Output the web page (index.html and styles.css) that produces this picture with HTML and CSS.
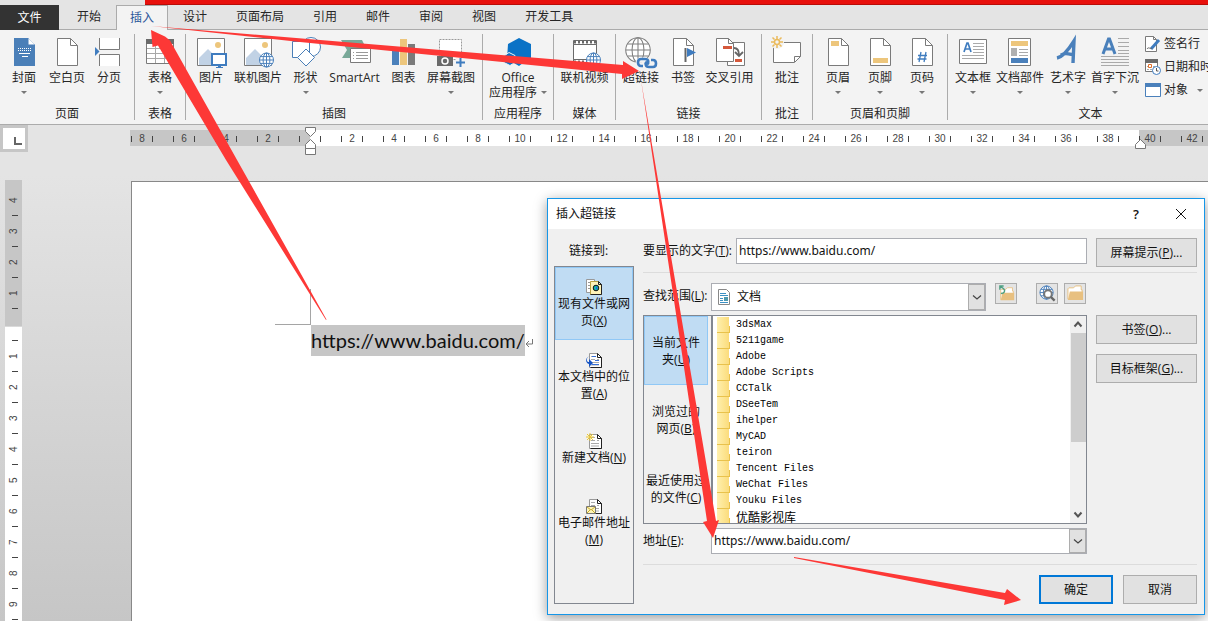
FILE: index.html
```
<!DOCTYPE html>
<html lang="zh-CN">
<head>
<meta charset="utf-8">
<title>插入超链接</title>
<link rel="stylesheet" href="styles.css">
</head>
<body>
<svg class="defs" aria-hidden="true">
  <symbol id="page" viewBox="0 0 36 36"><path d="M8.5 4.5h13l7 7v20h-20z" fill="#fff" stroke="#7a7a7a"/><path d="M21.5 4.5v7h7" fill="none" stroke="#7a7a7a"/></symbol>
  <symbol id="globe" viewBox="0 0 16 16"><circle cx="8" cy="8" r="7" fill="#fff"/><g fill="none" stroke="currentColor"><circle cx="8" cy="8" r="7"/><ellipse cx="8" cy="8" rx="3.4" ry="7"/><path d="M8 1v14M1 8h14M2 4.6h12M2 11.4h12"/></g></symbol>
  <symbol id="picture" viewBox="0 0 36 36"><path d="M4.500 4.500h27v27h-27z" fill="#fff" stroke="#7a7a7a"/><path d="M6 24l9-9 9 9v7H6z" fill="#c1d2e5"/><circle cx="25" cy="11" r="3" fill="#edc67c"/></symbol>
  <symbol id="doc" viewBox="0 0 16 16"><path d="M3.500 1.500h8l4 4v10h-12z" fill="#fff" stroke="#999"/><path d="M15.500 5.500v10h-11M11.500 1.500l4 4h-4z" fill="none" stroke="#222"/><path d="M5 4.500h4M5 7.500h4M5 10.500h8M5 13h8M11 7.500h2" stroke="#aaa"/></symbol>
  <symbol id="chevron" viewBox="0 0 10 10"><path d="M1 3.500l4 3.500 4-3.500" fill="none" stroke="#444" stroke-width="1.200"/></symbol>
  <symbol id="folder" viewBox="0 0 18 18"><path d="M1 15V4l1-1h5l2-2h6v4h1v10z" fill="#fff" stroke="#e8c080"/><path d="M1 16l2-9h14v9z" fill="#e8c080"/></symbol>
</svg>

<header class="top">
  <div class="strip"></div>
  <nav class="tabs">
    <button class="tab file">文件</button><button class="tab">开始</button><button class="tab active">插入</button><button class="tab">设计</button><button class="tab">页面布局</button><button class="tab">引用</button><button class="tab">邮件</button><button class="tab">审阅</button><button class="tab">视图</button><button class="tab">开发工具</button>
  </nav>
</header>

<section class="ribbon">
  <div class="group pages"><div class="tools">
    <button class="tool w40"><svg viewBox="0 0 36 36"><path d="M8 4h14l7 7v21H8z" fill="#4a7fb8"/><path d="M22 4v7h7" fill="#fff" stroke="#4a7fb8"/><path d="M12 14.500h13M12 16.500h13" stroke="#fff" stroke-dasharray="1 1"/><path d="M13 19.500h11M16 22.500h6" stroke="#fff"/></svg>封面<i class="caret"></i></button>
    <button class="tool w46"><svg><use href="#page"/></svg>空白页</button>
    <button class="tool w38"><svg viewBox="0 0 36 36"><path d="M8.500 4v11.500h20V4M8.500 32V20.500h20V32" fill="#fff" stroke="#7a7a7a"/><path d="M4 13l4.500 4.500L4 22z" fill="#3f7cbf"/></svg>分页</button>
  </div><div class="caption">页面</div></div>
  <div class="group single"><div class="tools">
    <button class="tool w50"><svg viewBox="0 0 36 36"><path d="M4.500 5.500h27v24h-27z" fill="#fff" stroke="#7a7a7a"/><path d="M4 5h28v5H4z" fill="#6a6a6a"/><path d="M5 14.500h26M5 19.500h26M5 24.500h26M13.500 10v19M22.500 10v19" stroke="#a8a8a8"/></svg>表格<i class="caret"></i></button>
  </div><div class="caption">表格</div></div>
  <div class="group art"><div class="tools">
    <button class="tool w36"><svg viewBox="0 0 36 36"><use href="#picture"/><path d="M19 20h14v11H19z" fill="#fff" stroke="#3f7cbf" stroke-width="2"/><path d="M25 31h3v2h2v1h-7v-1h2z" fill="#3f7cbf"/></svg>图片</button>
    <button class="tool w58"><svg viewBox="0 0 36 36"><use href="#picture"/><use class="blue" href="#globe" x="18.500" y="18" width="16" height="16"/></svg>联机图片</button>
    <button class="tool w37"><svg viewBox="0 0 36 36" fill="#fff" stroke="#4a7fb8"><circle cx="23" cy="13" r="9.500"/><path d="M4.500 7.500h17v16h-17z"/><path d="M18 15l8.500 8.500L18 32l-8.500-8.500z"/></svg>形状<i class="caret"></i></button>
    <button class="tool w61"><svg viewBox="0 0 36 36"><path d="M4 6h21l4 8-6 10H5l5-8z" fill="#78a898"/><path d="M13.500 14.500h20v14h-20z" fill="#fff" stroke="#7a7a7a"/><path d="M19 18.500h12M19 21.500h12M19 24.500h12M16 18.500h1M16 21.500h1M16 24.500h1" stroke="#999"/></svg>SmartArt</button>
    <button class="tool w37"><svg viewBox="0 0 36 36"><path d="M6 15h7v16H6z" fill="#4a80bb"/><path d="M14 5h7v26h-7z" fill="#edc67c"/><path d="M22 10h7v21h-7z" fill="#7a7a7a"/></svg>图表</button>
    <button class="tool w58"><svg viewBox="0 0 36 36"><path d="M6.500 5.500h22v20h-22z" fill="#fff" stroke="#999" stroke-dasharray="2 1"/><path d="M4 22h4l1-2h6l1 2h4v10H4z" fill="#6a6a6a"/><circle cx="12" cy="27" r="3" fill="none" stroke="#fff" stroke-width="1.500"/><path d="M23 24h9v9h-9z" fill="#f3f3f3"/><path d="M27.500 24v9M23 28.500h9" stroke="#3f7cbf" stroke-width="2"/></svg>屏幕截图<i class="caret"></i></button>
  </div><div class="caption">插图</div></div>
  <div class="group apps"><div class="tools">
    <button class="tool w70"><svg viewBox="0 0 36 36"><path d="M19 4l12 6v14l-8 5-4 3-12-7 1-15z" fill="#0a72c6"/><path d="M4 22l5-3.500 6 3v7l-5 3-6-3z" fill="#0a72c6" stroke="#f3f3f3"/></svg>Office<span class="two">应用程序<i class="caret beside"></i></span></button>
  </div><div class="caption">应用程序</div></div>
  <div class="group media"><div class="tools">
    <button class="tool w61"><svg viewBox="0 0 36 36"><path d="M6.500 6.500h23v23h-23z" fill="#fff" stroke="#6a6a6a"/><path d="M7 8h22M7 28h22" stroke="#6a6a6a" stroke-width="3" stroke-dasharray="2 2"/><path d="M6.500 10.500h23v15h-23z" fill="#fff" stroke="#6a6a6a"/><use class="blue" href="#globe" x="18.500" y="18" width="16" height="16"/></svg>联机视频</button>
  </div><div class="caption">媒体</div></div>
  <div class="group links"><div class="tools">
    <button class="tool w40"><svg viewBox="0 0 36 36"><use class="gray" href="#globe" x="1" y="2" width="28" height="28"/><g fill="none" stroke="#f3f3f3" stroke-width="5"><rect x="15" y="26" width="9" height="6" rx="3"/><rect x="23" y="26" width="9" height="6" rx="3"/></g><g fill="none" stroke="#3f7cbf" stroke-width="2.600"><path d="M20 32h-2c-4 0-4-7 0-7h4c4 0 4 4 2 5.500"/><path d="M28 26h2c4 0 4 7 0 7h-4c-4 0-4-4-2-5.500"/></g></svg>超链接</button>
    <button class="tool w44"><svg viewBox="0 0 36 36"><use href="#page"/><path d="M20.500 14v14" stroke="#666" stroke-width="2"/><path d="M22 14l9 4.500-9 4.500z" fill="#3f7cbf"/></svg>书签</button>
    <button class="tool w49"><svg viewBox="0 0 36 36"><path d="M15.500 8.500h17v23h-17z" fill="#fff" stroke="#7a7a7a"/><path d="M4.500 4.500h12l5 5v18h-17z" fill="#fff" stroke="#7a7a7a"/><path d="M16.500 4.500v5h5" fill="none" stroke="#7a7a7a"/><path d="M11 12h9v3h-9zM23 25h7v3h-7z" fill="#d5583b"/><path d="M22 14c4 0 5 3 5 7M23 18l4 4 4-4" fill="none" stroke="#666" stroke-width="1.800"/></svg>交叉引用</button>
  </div><div class="caption">链接</div></div>
  <div class="group single"><div class="tools">
    <button class="tool w50"><svg viewBox="0 0 36 36"><path d="M4.500 8.500h27v14l-6 6h-21z" fill="#fff" stroke="#7a7a7a"/><path d="M25.500 28v-5.500h6" fill="none" stroke="#7a7a7a"/><circle cx="8" cy="8" r="7" fill="#f3f3f3"/><circle cx="8" cy="8" r="2.500" fill="none" stroke="#eaba5c" stroke-width="1.500"/><path d="M8 2v3M8 11v3M2 8h3M11 8h3M3.500 3.500l2 2M10.500 10.500l2 2M12.500 3.500l-2 2M5.500 10.500l-2 2" stroke="#eaba5c" stroke-width="1.500"/></svg>批注</button>
  </div><div class="caption">批注</div></div>
  <div class="group heads"><div class="tools">
    <button class="tool w42"><svg viewBox="0 0 36 36"><use href="#page"/><path d="M11 7h8v5h-8z" fill="#edc67c"/></svg>页眉<i class="caret"></i></button>
    <button class="tool w42"><svg viewBox="0 0 36 36"><use href="#page"/><path d="M11 24h15v5H11z" fill="#edc67c"/></svg>页脚<i class="caret"></i></button>
    <button class="tool w42"><svg viewBox="0 0 36 36"><use href="#page"/><path d="M17 18l-2 10M22 18l-2 10M14 21.500h9M13.500 25h9" stroke="#3f7cbf" stroke-width="1.300"/></svg>页码<i class="caret"></i></button>
  </div><div class="caption">页眉和页脚</div></div>
  <div class="group words"><div class="tools">
    <button class="tool w40"><svg viewBox="0 0 36 36"><path d="M4.500 5.500h27v24h-27z" fill="#fff" stroke="#7a7a7a"/><path d="M9 18l3-9h1l3 9M10 15h5" fill="none" stroke="#3f7cbf" stroke-width="1.700"/><path d="M18 9.500h11M18 12.500h11M18 15.500h11M18 18.500h11M7 21.500h22M7 24.500h22" stroke="#aaa"/></svg>文本框<i class="caret"></i></button>
    <button class="tool w54"><svg viewBox="0 0 36 36"><path d="M6.500 4.500h22v27h-22z" fill="#fff" stroke="#7a7a7a"/><path d="M9 7h17v5H9z" fill="#edc67c"/><path d="M9 14h6v8H9z" fill="#b0b0b0"/><path d="M17 15.500h9M17 18.500h9M17 21.500h9" stroke="#aaa"/><path d="M9 24h17v5H9z" fill="#4a80bb"/></svg>文档部件<i class="caret"></i></button>
    <button class="tool w42"><svg viewBox="0 0 36 36"><path d="M7 24c5-1 12-9 17-17l-1 22M11 21c4-3 8-1 13 0" fill="none" stroke="#4a80bb" stroke-width="3.400"/></svg>艺术字<i class="caret"></i></button>
    <button class="tool w52"><svg viewBox="0 0 36 36"><path d="M6 20l5.500-15h1L18 20M8 15h8" fill="none" stroke="#4a80bb" stroke-width="3"/><path d="M21 4.500h11M21 8.500h11M21 12.500h11M21 16.500h11M21 19.500h11M4 22.500h28M4 25.500h28M4 28.500h28M4 31.500h28" stroke="#aaa"/></svg>首字下沉<i class="caret"></i></button>
    <div class="stack">
      <button class="mini"><svg viewBox="0 0 16 16"><path d="M.5.500h8l3 3v12H.5z" fill="#fff" stroke="#7a7a7a"/><path d="M8.500.500v3h3" fill="none" stroke="#7a7a7a"/><path d="M6 13l8-9" stroke="#3f7cbf" stroke-width="3"/><path d="M2 13c2-3 3 1 5-1" fill="none" stroke="#666"/></svg>签名行</button>
      <button class="mini"><svg viewBox="0 0 16 16"><path d="M.5.500h12v12H.5z" fill="#fff" stroke="#777"/><path d="M0 0h13v4H0z" fill="#6a6a6a"/><path d="M2 7.500h9M2 10.500h9" stroke="#aaa" stroke-dasharray="2 1"/><path d="M3.500 5.500h3v3h-3z" fill="#fff" stroke="#e0702a"/><circle cx="11.500" cy="11.500" r="4" fill="#fff" stroke="#3f7cbf"/><path d="M11.500 9v3h2" fill="none" stroke="#555"/></svg>日期和时间</button>
      <button class="mini"><svg viewBox="0 0 16 16"><path d="M.5 1.500h15v13H.5z" fill="#fff" stroke="#4a80bb"/><path d="M0 1h16v4H0z" fill="#4a80bb"/></svg>对象<i class="caret beside far"></i></button>
    </div>
  </div><div class="caption">文本</div></div>
</section>

<main class="work">
  <div class="ruler-row">
    <button class="corner" aria-label="制表符"><svg viewBox="0 0 22 21"><path d="M12 9v7h7" fill="none" stroke="#666" stroke-width="2"/></svg></button>
    <div class="ruler"><b>8</b><b>6</b><b>4</b><b>2</b><b></b><b>2</b><b>4</b><b>6</b><b>8</b><b>10</b><b>12</b><b>14</b><b>16</b><b>18</b><b>20</b><b>22</b><b>24</b><b>26</b><b>28</b><b>30</b><b>32</b><b>34</b><b>36</b><b>38</b><b>40</b><b>42</b>
      <svg class="indent left" viewBox="0 0 11 28" fill="#fff" stroke="#777"><path d="M.5.500h10v4l-5 5-5-5zM.5 21.500v-4l5-5 5 5v4zM.5 21.500h10v6H.5z"/></svg>
      <svg class="indent right" viewBox="0 0 11 28" fill="#fff" stroke="#777"><path d="M.5 21.500v-4l5-5 5 5v4z"/></svg>
    </div>
  </div>
  <div class="canvas">
    <div class="vruler"><div class="vtop"><b>4</b><b>3</b><b>2</b><b>1</b></div><div class="vmain"><b>1</b><b>2</b><b>3</b><b>4</b><b>5</b><b>6</b><b>7</b><b>8</b><b>9</b></div></div>
    <article class="sheet">
      <div class="crop"></div>
      <p class="line"><mark>https://www.baidu.com/</mark><svg viewBox="0 0 8 10"><path d="M7.500 1v5H1M4 3L1 6l3 3" fill="none" stroke="#777"/></svg></p>
    </article>
  </div>
</main>

<form class="dialog" role="dialog" aria-labelledby="dlg-title">
  <header class="title"><span id="dlg-title">插入超链接</span><span class="grow"></span><button type="button" class="help">?</button><button type="button" class="close" aria-label="关闭"><svg viewBox="0 0 12 12"><path d="M1 1l10 10M11 1L1 11" stroke="#111"/></svg></button></header>
  <div class="content">
    <aside class="targets">
      <div class="heading">链接到:</div>
      <div class="target-list">
        <button type="button" class="target on"><svg viewBox="0 0 16 16"><path d="M.5.500h8v13h-8z" fill="#fff" stroke="#999"/><path d="M2 3.500h3M2 6.500h3M2 9.500h3" stroke="#999"/><path d="M4.500 2.500h8l3 3v10h-11z" fill="#fff3b8" stroke="#bba040"/><path d="M15.500 5.500v10h-11M12.500 2.500l3 3h-3z" fill="none" stroke="#222"/><circle cx="10" cy="9" r="2.800" fill="#1ab4a8" stroke="#111"/><path d="M10 7.500l1.500 1.500-1.500 1.500z" fill="#24f"/></svg>现有文件或网<br>页(<u>X</u>)</button>
        <button type="button" class="target"><svg viewBox="0 0 16 16"><use href="#doc"/><path d="M6 4.500h4M9 8.500h4M6 12.500h7" stroke="#3670d8"/><path d="M4 4C0 5 0 10 3 10V7l4 4-4 4v-3C-1 11-1 5 4 4z" fill="#1553c4"/></svg>本文档中的位<br>置(<u>A</u>)</button>
        <button type="button" class="target"><svg viewBox="0 0 16 16"><use href="#doc"/><path d="M4 0v8M0 4h8M1 1l6 6M7 1L1 7" stroke="#edc830"/></svg>新建文档(<u>N</u>)</button>
        <button type="button" class="target"><svg viewBox="0 0 16 16"><use href="#doc"/><path d="M.5 8.500h9v7h-9z" fill="#fff6b8" stroke="#777"/><path d="M1 9l4 3 4-3M1 15l3-3M9 15l-3-3" fill="none" stroke="#c5a72d"/></svg>电子邮件地址<br>(<u>M</u>)</button>
      </div>
    </aside>
    <div class="fields">
      <div class="row first"><label class="lbl" for="text">要显示的文字(<u>T</u>):</label><input id="text" class="box" value="https://www.baidu.com/"><button type="button" class="btn tip">屏幕提示(<u>P</u>)...</button></div>
      <hr>
      <div class="row look"><label class="lbl short" for="look">查找范围(<u>L</u>):</label>
        <div class="combo"><svg class="docicon" viewBox="0 0 14 16"><path d="M1.500.500h8l3 3v12h-11z" fill="#fff" stroke="#888"/><path d="M3 4.500h6M3 6.500h8M3 9.500h3M3 11.500h3M3 13.500h8" stroke="#3c91c4"/><path d="M7 8h4v4H7z" fill="#4f9aae"/></svg><select id="look"><option>文档</option></select><span class="drop"><svg><use href="#chevron"/></svg></span></div>
        <button type="button" class="ib up" aria-label="上一级"><svg viewBox="0 0 18 18"><use href="#folder" x="2" y="2" width="16" height="16"/><path d="M2 5V1h4M2 1l4 3c2 2 1 5-3 5" fill="none" stroke="#4fa083" stroke-width="1.500"/></svg></button>
        <button type="button" class="ib web" aria-label="浏览 Web"><svg viewBox="0 0 18 18"><use class="blue" href="#globe" width="16" height="16"/><circle cx="9.500" cy="9.500" r="4" fill="#fff" stroke="#777" stroke-width="2"/><path d="M12.500 12.500l4 4" stroke="#666" stroke-width="2.500"/></svg></button>
        <button type="button" class="ib" aria-label="浏览文件"><svg><use href="#folder"/></svg></button>
      </div>
      <div class="row browse">
        <div class="places">
          <button type="button" class="place on">当前文件<br>夹(<u>U</u>)</button>
          <button type="button" class="place">浏览过的<br>网页(<u>B</u>)</button>
          <button type="button" class="place">最近使用过<br>的文件(<u>C</u>)</button>
        </div>
        <div class="listing">
          <ul class="files"><li>3dsMax</li><li>5211game</li><li>Adobe</li><li>Adobe Scripts</li><li>CCTalk</li><li>DSeeTem</li><li>ihelper</li><li>MyCAD</li><li>teiron</li><li>Tencent Files</li><li>WeChat Files</li><li>Youku Files</li><li class="cjk">优酷影视库</li></ul>
          <div class="scroll"><svg viewBox="0 0 10 10"><path d="M1.500 7L5 3l3.500 4" fill="none" stroke="#555" stroke-width="2"/></svg><div class="thumb"></div><svg viewBox="0 0 10 10"><path d="M1.500 3L5 7l3.500-4" fill="none" stroke="#555" stroke-width="2"/></svg></div>
        </div>
        <div class="side"><button type="button" class="btn">书签(<u>O</u>)...</button><button type="button" class="btn">目标框架(<u>G</u>)...</button></div>
      </div>
      <div class="row addr"><label class="lbl short" for="addr">地址(<u>E</u>):</label><div class="combo"><input id="addr" value="https://www.baidu.com/"><span class="drop"><svg><use href="#chevron"/></svg></span></div></div>
      <hr class="last">
      <div class="actions"><button type="button" class="btn ok">确定</button><button type="button" class="btn">取消</button></div>
    </div>
  </div>
</form>

<svg class="arrows" width="1208" height="621" viewBox="0 0 1208 621" fill="#fd3836" aria-hidden="true">
  <path d="M326.500 319.500L170 40.500 165 36.500 151 30 152.500 47 158 45.500 226 160 326 320z"/>
  <path d="M151 26l472 39v-4l16 10-17 8v-5L300 42z"/>
  <path d="M641 80l75 441 3-1-6 18-10-16 4-1z"/>
  <path d="M794 557l211 36 2-4 14 11-17 5 1-5L794 558z"/>
</svg>
</body>
</html>
```
FILE: styles.css
```
* { box-sizing: border-box; }
body {
  margin: 0;
  height: 100vh;
  display: flex;
  flex-direction: column;
  position: relative;
  overflow: hidden;
  background: #e4e4e4;
  color: #262626;
  font: 12px/16px "Open Sans", "Noto Sans CJK SC", sans-serif;
}
button, input, select { font: inherit; color: inherit; margin: 0; padding: 0; border: 0; background: none; border-radius: 0; }
.defs { position: absolute; width: 0; height: 0; }
.blue { color: #4a80bb; }
.gray { color: #808080; stroke-width: 0.6px; }

.strip { height: 5px; margin-left: 145px; background: #e8100c; border-bottom: 1px solid #b80c08; }
.tabs { display: flex; gap: 1px; height: 25px; border-bottom: 1px solid #ababab; }
.tab { padding: 0 14px; height: 24px; white-space: nowrap; }
.tab.file { width: 59px; height: 25px; margin-right: 3px; background: #333; color: #fff; }
.tab.active { height: 25px; padding: 0 13px; background: #f3f3f3; color: #2b579a; border: 1px solid #ababab; border-bottom: 0; }

.ribbon { display: flex; flex: none; height: 95px; padding: 4px 0; background: #f3f3f3; border-bottom: 1px solid #ababab; overflow: hidden; }
.group { flex: none; display: flex; flex-direction: column; border-right: 1px solid #ababab; }
.tools { display: flex; flex: 1; justify-content: center; }
.caption { text-align: center; line-height: 12px; }
.pages { width: 135px; }
.single { width: 51px; }
.art { width: 297px; }
.apps { width: 71px; }
.media { width: 62px; }
.links { width: 146px; }
.heads { width: 135px; }
.words { width: 286px; }
.pages .tools { padding-right: 2px; }
.art .tools { padding-left: 5px; }
.links .tools { padding-right: 2px; }
.words .tools { justify-content: flex-start; padding-left: 5px; }
.tool { display: flex; flex-direction: column; align-items: center; flex: none; line-height: 15px; white-space: nowrap; }
.tool svg { display: block; flex: none; width: 36px; height: 36px; }
.w36 { width: 36px; } .w37 { width: 37px; } .w38 { width: 38px; } .w40 { width: 40px; }
.w42 { width: 42px; } .w44 { width: 44px; } .w46 { width: 46px; } .w49 { width: 49px; }
.w50 { width: 50px; } .w52 { width: 52px; } .w54 { width: 54px; } .w58 { width: 58px; }
.w61 { width: 61px; } .w70 { width: 70px; }
.caret { display: block; margin-top: 6px; border: 3px solid transparent; border-top-color: #777; border-bottom: 0; }
.two { display: flex; align-items: center; gap: 4px; }
.caret.beside { margin-top: 0; }
.caret.far { margin-left: 6px; }
.stack { display: flex; flex-direction: column; gap: 7px; padding: 2px 0 0 4px; }
.mini { display: flex; align-items: center; gap: 3px; height: 16px; white-space: nowrap; }
.mini svg { width: 16px; height: 16px; }

.work { flex: 1; min-height: 0; display: flex; flex-direction: column; background: linear-gradient(#e4e4e4 10%, #c6c6c6); }
.ruler-row { display: flex; align-items: flex-start; height: 55px; flex: none; }
.corner { width: 28px; height: 27px; flex: none; background: #fff; border: 3px solid #c6c6c6; }
.corner svg { display: block; width: 22px; height: 21px; }
.ruler {
  position: relative; flex: 1; min-width: 0; display: flex; height: 16px; margin: 5px 0 0 102px; padding-left: 1px;
  background: linear-gradient(90deg, #c6c6c6 180px, #fff 180px, #fff 1009px, #c6c6c6 1009px);
  font: 10px/18px "Liberation Sans", sans-serif; color: #444;
}
.ruler b {
  flex: none; width: 42px; padding-right: 20px; font-weight: 400; text-align: center;
  background: linear-gradient(#444, #444) 0 6px / 1px 6px no-repeat, linear-gradient(#444, #444) 21px 6px / 1px 6px no-repeat;
}
.indent { position: absolute; top: -3px; width: 11px; height: 28px; }
.indent.left { left: 175px; }
.indent.right { left: 1005px; }

.canvas { flex: 1; min-height: 0; display: flex; overflow: hidden; }
.vruler { flex: none; width: 17px; margin-left: 5px; font: 10px/17px "Liberation Sans", sans-serif; color: #444; }
.vtop { height: 146px; padding-top: 5px; background: #c6c6c6; }
.vmain { height: 100%; margin-top: 1px; padding-top: 14px; background: #fff linear-gradient(#444, #444) 7px 13px / 6px 1px no-repeat; }
.vruler b {
  display: block; width: 17px; height: 31px; font-weight: 400; text-align: center; writing-mode: vertical-rl; transform: rotate(180deg);
  background: linear-gradient(#444, #444) 4px 0 / 6px 1px no-repeat;
}
.sheet { flex: 1; margin: 1px 0 0 109px; padding: 107px 0 0 143px; background: #fff; border: 1px solid #888; border-width: 1px 0 0 1px; }
.crop { width: 36px; height: 36px; border: 1px solid #a5a5a5; border-width: 0 1px 1px 0; }
.line { display: flex; align-items: center; margin: 0 0 0 36px; font: 20px/31px Lato, sans-serif; color: #111; }
.line mark { background: #c6c6c6; color: inherit; }
.line svg { width: 8px; height: 10px; margin-top: 5px; }

.dialog {
  position: absolute; left: 547px; top: 198px; width: 658px; display: flex; flex-direction: column;
  background: #f0f0f0; border: 1px solid #1596e8; box-shadow: 0 3px 12px #0006; color: #111;
}
.title { display: flex; align-items: center; height: 30px; padding: 0 17px 0 8px; background: #fff; }
.grow { flex: 1; }
.help { font-size: 13px; font-weight: 600; margin-right: 36px; }
.close svg { display: block; width: 12px; height: 12px; }
.content { display: flex; gap: 9px; padding: 0 7px 10px 6px; }
.targets { flex: none; width: 80px; display: flex; flex-direction: column; }
.heading { height: 37px; padding: 14px 0 0 15px; }
.target-list { flex: 1; border: 1px solid #828790; }
.target { width: 78px; height: 73px; display: block; text-align: center; line-height: 17px; white-space: nowrap; border: 1px solid transparent; }
.target svg { display: block; width: 16px; height: 16px; margin: 0 auto; }
.on { background: #c0dcf3; border-color: #90c8f6; }
.fields { flex: 1; min-width: 0; display: flex; flex-direction: column; padding-top: 9px; }
.row { display: flex; align-items: flex-start; }
.lbl { flex: none; width: 93px; line-height: 26px; white-space: nowrap; }
.lbl.short { width: 68px; }
.box { flex: 1; min-width: 0; height: 26px; padding: 0 2px 2px; background: #fff; border: 1px solid #abadb3; }
.box, .combo input { font: 12px/20px "Noto Sans", sans-serif; }
.btn { flex: none; height: 29px; background: #e1e1e1; border: 1px solid #adadad; }
.tip { width: 101px; margin-left: 9px; }
hr { width: 100%; height: 1px; margin: 5px 0 10px; border: 0; background: #dcdcdc; }
.combo { display: flex; align-items: stretch; height: 28px; background: #fff; border: 1px solid #abadb3; }
.look .combo { width: 275px; align-items: center; }
.docicon { width: 14px; height: 16px; margin-left: 5px; }
.combo select { flex: 1; height: 26px; padding-left: 6px; appearance: none; }
.combo input { flex: 1; min-width: 0; padding: 0 2px; }
.drop { width: 17px; align-self: stretch; display: flex; align-items: center; justify-content: center; background: #e1e1e1; border: 1px solid #adadad; }
.drop svg { width: 10px; height: 10px; }
.ib { width: 22px; height: 21px; display: flex; align-items: center; justify-content: center; border: 1px solid #adadad; background: #e4e4e4; }
.ib svg { width: 17px; height: 17px; }
.up { margin: 0 19px 0 9px; }
.web { margin-right: 6px; }
.browse { margin-top: 4px; }
.places { flex: none; width: 68px; height: 209px; border: 1px solid #828790; border-right: 0; }
.place { width: 64px; height: 69px; display: block; text-align: center; line-height: 17px; white-space: nowrap; border: 1px solid transparent; }
.place.on { border-color: #90c8f6; }
.listing { flex: 1; display: flex; height: 209px; background: #fff; border: 1px solid #828790; border-left-width: 2px; overflow: hidden; }
.files { flex: 1; margin: 0; padding: 1px 0 0 4px; list-style: none; overflow: hidden; font: 10px/16px "Liberation Mono", monospace; color: #000; }
.files li { height: 16px; padding-left: 19px; background: linear-gradient(#e9c24c, #e9c24c) 12px 9px / 1px 6px no-repeat, linear-gradient(90deg, #fff0ae, #fbdc7c) 0 0 / 12px 15px no-repeat, linear-gradient(#e9c24c, #e9c24c) 0 15px / 13px 1px no-repeat; }
.files .cjk { font: 12px/15px "Noto Sans CJK SC", sans-serif; }
.scroll { width: 16px; display: flex; flex-direction: column; align-items: center; background: #f0f0f0; }
.scroll svg { width: 10px; height: 17px; flex: none; }
.thumb { width: 15px; height: 109px; margin-bottom: auto; background: #cdcdcd; }
.side { width: 101px; margin-left: 9px; display: flex; flex-direction: column; gap: 10px; }
.addr { margin-top: 4px; }
.addr .combo { flex: 1; height: 26px; margin-right: 110px; }
.last { margin: 10px 0; }
.actions { display: flex; justify-content: flex-end; gap: 10px; }
.actions .btn { width: 74px; }
.actions .ok { border: 2px solid #0078d7; }

.arrows { position: absolute; left: 0; top: 0; pointer-events: none; }
```
